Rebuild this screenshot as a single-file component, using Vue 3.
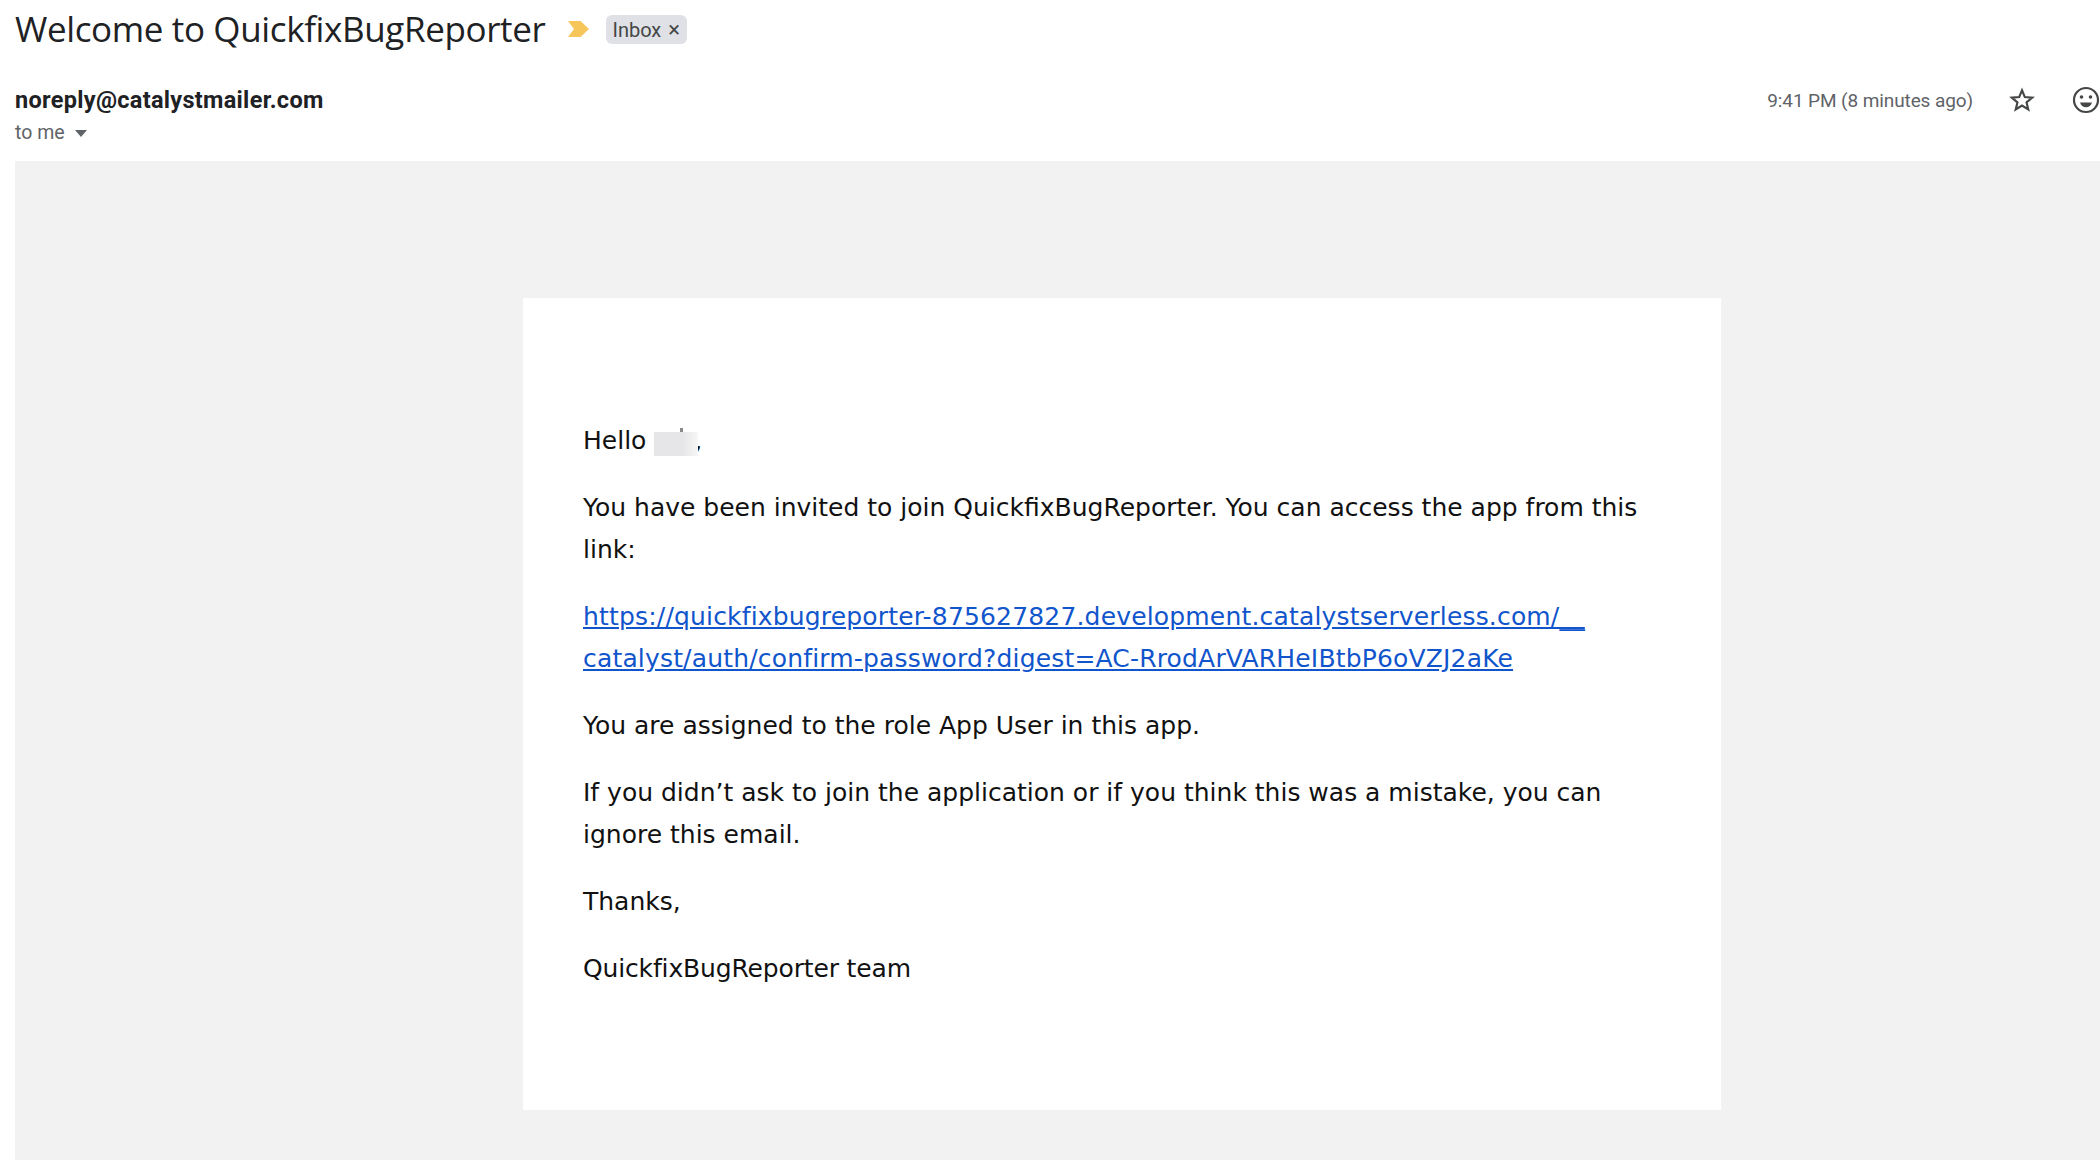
<template>
  <div class="page">
    <div class="subject-row">
      <h1 class="subject">Welcome to QuickfixBugReporter</h1>
      <svg class="marker" width="21" height="16" viewBox="0 0 21 16">
        <path d="M0 0h12.500L21 8l-8.500 8H0l6-8z" fill="#f6c65b" />
      </svg>
      <span class="label">Inbox <span class="label-x">×</span></span>
    </div>

    <div class="meta-row">
      <div class="sender">
        <div class="from">noreply@catalystmailer.com</div>
        <div class="to">
          to me
          <svg width="12" height="7" viewBox="0 0 12 7"><path d="M0 0h12L6 7z" fill="#5f6368" /></svg>
        </div>
      </div>
      <div class="actions">
        <span class="time">9:41 PM (8 minutes ago)</span>
        <svg class="star" width="26" height="26" viewBox="0 0 24 24">
          <path d="M12 3l2.600 6.300 6.800.5-5.200 4.400 1.600 6.600L12 17.200l-5.800 3.600 1.600-6.600-5.200-4.400 6.800-.5z" fill="none" stroke="#444746" stroke-width="2" stroke-linejoin="miter" />
        </svg>
        <svg class="smile" width="28" height="28" viewBox="0 0 28 28">
          <circle cx="14" cy="14" r="12" fill="none" stroke="#444746" stroke-width="2.200" />
          <circle cx="9.500" cy="11" r="1.800" fill="#444746" />
          <circle cx="18.500" cy="11" r="1.800" fill="#444746" />
          <path d="M8 16.500h12c-.8 3-3.200 4.800-6 4.800s-5.200-1.800-6-4.800z" fill="#444746" />
        </svg>
      </div>
    </div>

    <div class="mail-body">
      <div class="card">
        <p>Hello <span class="blurred"></span>,</p>
        <p>You have been invited to join QuickfixBugReporter. You can access the app from this link:</p>
        <p>
          <a class="link" href="#">https://quickfixbugreporter-875627827.development.catalystserverless.com/__<br />catalyst/auth/confirm-password?digest=AC-RrodArVARHeIBtbP6oVZJ2aKe</a>
        </p>
        <p>You are assigned to the role App User in this app.</p>
        <p>If you didn’t ask to join the application or if you think this was a mistake, you can ignore this email.</p>
        <p>Thanks,</p>
        <p class="signature">QuickfixBugReporter team</p>
      </div>
    </div>
  </div>
</template>

<script setup>
</script>

<style>
html,
body {
  margin: 0;
  background: #fff;
  overflow: hidden;
}
</style>

<style scoped>
.page {
  width: 2100px;
  height: 1160px;
  overflow: hidden;
  font-family: Roboto, "Liberation Sans", sans-serif;
  color: #202124;
}

.subject-row {
  display: flex;
  align-items: center;
  height: 58px;
  padding-left: 15px;
}

.subject {
  margin: 0;
  font-family: "Open Sans", Roboto, sans-serif;
  font-size: 35px;
  font-weight: 400;
  line-height: 42px;
  letter-spacing: -0.37px;
  white-space: nowrap;
}

.marker {
  margin-left: 23px;
}

.label {
  margin-left: 17px;
  padding: 0 7px 0 6px;
  height: 29px;
  line-height: 29px;
  border-radius: 6px;
  background: #dfe1e6;
  color: #444746;
  font-size: 20px;
}

.label-x {
  margin-left: 2px;
  font-size: 22px;
}

.meta-row {
  display: flex;
  justify-content: space-between;
  padding: 28px 0 0 15px;
  height: 78px;
  box-sizing: border-box;
}

.from {
  font-size: 23.500px;
  font-weight: 700;
  line-height: 28px;
  letter-spacing: 0.3px;
}

.to {
  margin-top: 7px;
  display: flex;
  align-items: center;
  gap: 10px;
  color: #5f6368;
  font-size: 19.500px;
  line-height: 24px;
}

.actions {
  display: flex;
  align-items: center;
  height: 28px;
}

.time {
  color: #5f6368;
  font-size: 19px;
  letter-spacing: -0.1px;
}

.star {
  margin-left: 36px;
}

.smile {
  margin-left: 37px;
}

.mail-body {
  margin: 25px 0 0 15px;
  padding: 137px 0 0 508px;
  height: 999px;
  background: #f2f2f2;
  box-sizing: border-box;
}

.card {
  width: 1198px;
  height: 812px;
  padding: 122px 60px 0;
  box-sizing: border-box;
  background: #fff;
  font-family: "DejaVu Sans", sans-serif;
  font-size: 25px;
  line-height: 42px;
  color: #111;
}

.card p {
  margin: 0 0 25px;
}

.card .signature {
  letter-spacing: -0.15px;
}

.link {
  color: #1155cc;
  text-decoration: underline;
  letter-spacing: 0.17px;
}

.blurred {
  position: relative;
  display: inline-block;
  width: 44px;
  height: 24px;
  margin-right: -4px;
  vertical-align: -7px;
  background: linear-gradient(90deg, #e6e6e8 65%, #f7f7f7);
}

.blurred::after {
  content: "";
  position: absolute;
  left: 26px;
  top: -4px;
  width: 3px;
  height: 4px;
  background: #8a8a8a;
}
</style>
